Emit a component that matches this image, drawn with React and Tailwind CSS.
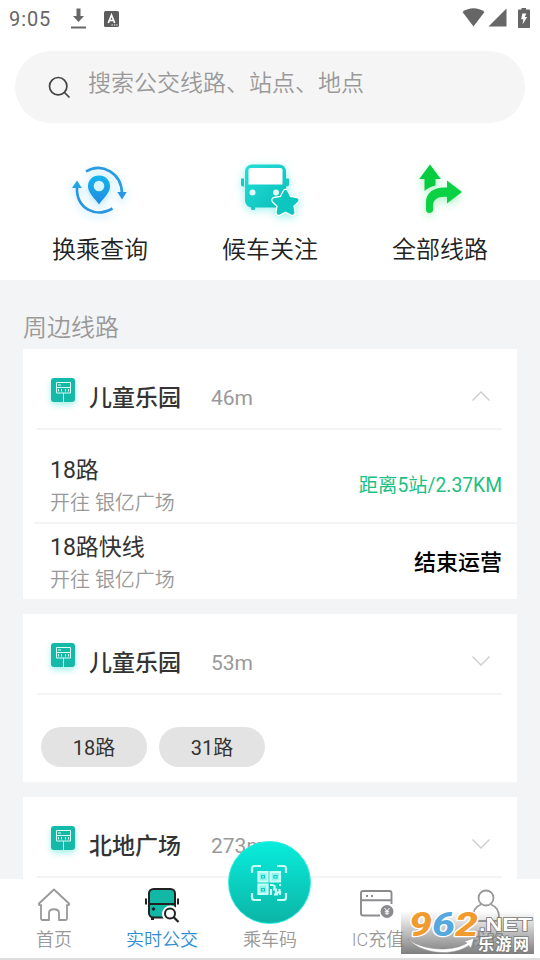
import clsx from "clsx";

const stations = [
  {
    name: "儿童乐园",
    distance: "46m",
    open: true,
    lines: [
      { name: "18路", to: "银亿广场", status: "距离5站/2.37KM", running: true },
      { name: "18路快线", to: "银亿广场", status: "结束运营", running: false },
    ],
  },
  { name: "儿童乐园", distance: "53m", tags: ["18路", "31路"] },
  { name: "北地广场", distance: "273m", tags: [] },
];

function StatusBar() {
  return (
    <div className="flex h-[37px] items-center justify-between pl-[9px] pr-[10px] text-[#666]">
      <div className="flex items-center">
        <span className="mt-px w-[62px] text-[20px] leading-[37px] tracking-[0.9px]">9:05</span>
        <svg width="15" height="21" viewBox="0 0 15 21" fill="#666">
          <path d="M5.500 0.500h4v7.500h3.500L7.500 14 2 8h3.500zM0 18.500h15v2H0z" />
        </svg>
        <svg className="ml-[18px]" width="15" height="16" viewBox="0 0 15 16">
          <rect width="15" height="16" rx="1.500" fill="#5c5c5c" />
          <path d="M4.300 12 7.500 4l3.200 8M5.500 9.500h4" stroke="#fff" strokeWidth="1.700" fill="none" />
          <path d="M7.500 14h1.300M10 14h1.300M12.300 14h1.300" stroke="#fff" strokeWidth="1.200" />
        </svg>
      </div>
      <div className="-mt-[2px] flex items-center">
        <svg width="23" height="19" viewBox="0 0 23 19" fill="#666">
          <path d="M0.500 4C7-1 16-1 22.500 4L11.500 18.500z" />
        </svg>
        <svg className="ml-[3px]" width="19" height="19" viewBox="0 0 19 19" fill="#666">
          <path d="M18.500 0.500v18H0.500z" />
        </svg>
        <svg className="ml-[11px]" width="12" height="20" viewBox="0 0 12 20">
          <path d="M3.500 0h4.500v1.500h3c.6 0 1 .4 1 1V19c0 .6-.4 1-1 1H1c-.6 0-1-.4-1-1V2.500c0-.6.4-1 1-1h2.500z" fill="#666" />
          <path d="M4.300 5.500h4L6.900 9h2.300l-4.700 7.500.8-5.300H3.200z" fill="#fff" />
        </svg>
      </div>
    </div>
  );
}

function SearchBox() {
  return (
    <div className="mx-[15px] mt-[14px] flex h-[72px] items-center rounded-full bg-[#f5f5f5] pl-[33px]">
      <svg width="23" height="23" viewBox="0 0 23 23" fill="none" stroke="#444" strokeWidth="1.700">
        <circle cx="10.200" cy="10.200" r="8.700" />
        <path d="M16.500 16.500 21.500 21.500" />
      </svg>
      <span className="-mt-[7px] ml-[17px] text-[23px] font-[350] leading-[34px] text-[#999]">
        搜索公交线路、站点、地点
      </span>
    </div>
  );
}

function TransferIcon() {
  return (
    <svg
      className="-ml-[2px] drop-shadow-[0_3px_4px_rgba(30,180,255,0.35)]"
      width="60"
      height="60"
      viewBox="0 0 60 60"
      fill="none"
    >
      <defs>
        <linearGradient id="pin" x1="0" y1="0" x2="0" y2="1">
          <stop offset="0" stopColor="#15b4f0" />
          <stop offset="1" stopColor="#2089e0" />
        </linearGradient>
      </defs>
      <path d="M17 11.500C33 2 53 13 53 34" stroke="#2a9be0" strokeWidth="2.600" />
      <path d="M48.300 32h9.400L53 39.500z" fill="#2a96df" />
      <path d="M43.500 48.500C27 58 7 49 8 27" stroke="#2a96df" strokeWidth="2.600" />
      <path d="M3 28h9.800L8 20.500z" fill="#22a5e6" />
      <path
        d="M30 15.500c-6.600 0-11 4.800-11 10.700C19 33 26 38.500 30 44.500c4-6 11-11.500 11-18.300 0-5.900-4.400-10.700-11-10.700z"
        fill="url(#pin)"
      />
      <circle cx="30" cy="26" r="5.300" fill="#d5f5ff" />
    </svg>
  );
}

function BusStarIcon() {
  return (
    <svg className="drop-shadow-[0_2px_4px_rgba(0,220,210,0.4)]" width="60" height="60" viewBox="0 0 60 60">
      <defs>
        <linearGradient id="busBody" x1="0" y1="0" x2="1" y2="1">
          <stop offset="0" stopColor="#25ded8" />
          <stop offset="1" stopColor="#09beb8" />
        </linearGradient>
      </defs>
      <path d="M1 18.500h3v8H3c-1.200 0-2-.8-2-2zM46 18.500h3v6c0 1.200-.8 2-2 2h-1zM11 45h4v3.500c0 2-4 2-4 0z" fill="#17c9c5" />
      <rect x="5" y="4.500" width="41" height="43" rx="7" fill="url(#busBody)" />
      <path d="M10.500 8h30c1.200 0 2 .9 2 2v14.500h-34V10c0-1.100.9-2 2-2z" fill="#fff" />
      <circle cx="12.500" cy="32.500" r="3" fill="#dffcfa" />
      <circle cx="36" cy="32.500" r="3" fill="#dffcfa" />
      <path
        d="M45.500 30c.9 0 1.500.7 2 1.700l2.600 5.300 5.800.9c2.800.4 3.400 2.200 1.500 4.100l-4.100 4.100 1 5.700c.4 2.700-1.200 3.700-3.500 2.500l-5.300-2.700-5.300 2.700c-2.300 1.200-3.900.2-3.500-2.500l1-5.700-4.100-4.100c-1.900-1.900-1.300-3.700 1.500-4.100l5.800-.9 2.600-5.300c.5-1 1.100-1.700 2-1.700z"
        fill="#0bc7c0"
        stroke="#fff"
        strokeWidth="2.600"
        paintOrder="stroke"
      />
    </svg>
  );
}

function RoutesIcon() {
  return (
    <svg className="drop-shadow-[0_3px_4px_rgba(20,220,90,0.35)]" width="60" height="60" viewBox="0 0 60 60">
      <path d="M20 4.500 30.800 19H25.500v6.500c-4 .8-7.500 2.500-11 5.500V19H9.200z" fill="#08cc3f" />
      <path d="M37 20.500 52 32 37 43.500V37c-8-.8-14 2-14 9v4c0 4-7 4-7 0v-8c0-10 9-15.500 21-14.500z" fill="#0bd144" />
    </svg>
  );
}

const shortcuts = [
  { label: "换乘查询", Icon: TransferIcon },
  { label: "候车关注", Icon: BusStarIcon },
  { label: "全部线路", Icon: RoutesIcon },
];

function StopIcon() {
  return (
    <svg className="drop-shadow-[0_3px_3px_rgba(0,215,195,0.35)]" width="24" height="24" viewBox="0 0 24 24" fill="none" stroke="#d9fff9">
      <rect width="24" height="24" rx="3" fill="#15b9a7" stroke="none" />
      <path d="M5.500 4.500h14v10.500h-14zM5.500 9.500h14M12.500 15v9" strokeWidth="1" />
      <path d="M7 7h3M7.500 11v2.500M10.500 11v2.500M14.500 11v2.500M17.500 11v2.500" strokeWidth="1" />
    </svg>
  );
}

function StationCard({ station }) {
  return (
    <div className="bg-white">
      <div className="ml-[14px] mr-[15px] flex h-[81px] items-center border-b-2 border-[#f3f4f6] pl-[14px] pr-3">
        <div className="mb-[12px] mt-[15px]">
          <StopIcon />
        </div>
        <span className="ml-[14px] mt-[21px] text-[23px] font-medium leading-[34px] text-[#333]">{station.name}</span>
        <span className="ml-[30px] mt-[18px] flex-1 text-[21px] leading-[30px] text-[#999]">{station.distance}</span>
        <svg
          className={clsx("mt-[15px]", !station.open && "rotate-180")}
          width="18"
          height="10"
          viewBox="0 0 18 10"
          fill="none"
          stroke="#ccc"
          strokeWidth="1.300"
        >
          <path d="M0.500 9.500 9 1l8.500 8.500" />
        </svg>
      </div>
      {station.lines && (
        <div>
          {station.lines.map((line, i) => (
            <div
              key={line.name}
              className={clsx(
                "ml-[11px] flex justify-between pl-4 pr-[15px]",
                i === 0 ? "h-[94px] border-b-2 border-[#f3f4f6] pt-6" : "h-[75px] pt-[7px]"
              )}
            >
              <div>
                <p className="text-[23px] leading-[34px] text-[#333]">{line.name}</p>
                <p className="text-[20px] font-[350] leading-[30px] text-[#999]">开往 {line.to}</p>
              </div>
              <span
                className={clsx(
                  line.running
                    ? "mt-[17px] text-[19.300px] leading-[30px] text-[#1dbf83]"
                    : "mt-[15px] text-[22px] font-medium leading-[34px] text-black"
                )}
              >
                {line.status}
              </span>
            </div>
          ))}
        </div>
      )}
      {station.tags && (
        <div className="flex h-[87px] gap-3 pl-[18px] pt-8">
          {station.tags.map((tag) => (
            <span
              key={tag}
              className="h-10 w-[106px] rounded-full bg-[#e3e3e3] text-center text-[20px] leading-[42px] text-[#333]"
            >
              {tag}
            </span>
          ))}
        </div>
      )}
    </div>
  );
}

function HomeIcon() {
  return (
    <svg width="34" height="34" viewBox="0 0 34 34" fill="none" stroke="#999" strokeWidth="1.800" strokeLinejoin="round">
      <path d="M2 15.500 17 1.500l15 14c.8.900-.3 2-2 1.500v13.500c0 1-.5 1.500-1.500 1.500h-6.500v-7c0-5-10-5-10 0v7H5.500c-1 0-1.500-.5-1.500-1.500V17C2.300 17.500 1.200 16.400 2 15.500z" />
    </svg>
  );
}

function BusSearchIcon() {
  return (
    <svg width="36" height="36" viewBox="0 0 36 36" fill="none" stroke="#222" strokeWidth="2">
      <path d="M2 11.500v6M34 11.500v6" />
      <path d="M8.500 30.500V33" strokeWidth="3" />
      <rect x="5" y="2" width="26" height="28.500" rx="4.500" fill="#12b8a5" />
      <path d="M5 17h26" />
      <circle cx="9.500" cy="22" r="1.300" fill="#222" strokeWidth="1" />
      <circle cx="26.500" cy="27" r="8.500" fill="#fff" stroke="none" />
      <circle cx="26" cy="26.500" r="5" fill="#fff" />
      <path d="m29.500 30 5 5" strokeWidth="2.300" />
    </svg>
  );
}

function WalletIcon() {
  return (
    <svg className="-ml-[3px]" width="34" height="30" viewBox="0 0 34 30" fill="none" stroke="#8c8c90" strokeWidth="1.900">
      <path d="M20 25.500H3c-1.300 0-2-.7-2-2V3c0-1.300.7-2 2-2h26.500c1.300 0 2 .7 2 2v11M1 10.200h30.500" />
      <path d="M6 6h2M11 6h2" strokeWidth="2" />
      <circle cx="27" cy="21.500" r="6.500" fill="#8c8c90" stroke="none" />
      <path d="m24.500 18 2.500 3 2.500-3M27 21v4M24.800 21.300h4.400M24.800 23.200h4.400" stroke="#fff" strokeWidth="1" />
    </svg>
  );
}

function UserIcon() {
  return (
    <svg className="mt-[2px]" width="28" height="34" viewBox="0 0 28 34" fill="none" stroke="#999" strokeWidth="1.800">
      <circle cx="14" cy="9" r="7.500" />
      <path d="M9 15.500C4 17.500 1 22 1 28c0 3 1 4 4 4h18c3 0 4-1 4-4 0-6-3-10.500-8-12.500" />
    </svg>
  );
}

function ScanButton() {
  return (
    <div className="-ml-[2px] -mt-[45px] flex h-[83px] w-[83px] items-center justify-center rounded-full border border-[#27ebdc] bg-linear-to-b from-[#08eddc] to-[#0bb5a6]">
      <svg width="38" height="38" viewBox="0 0 38 38" fill="none" stroke="#c8fff8" strokeWidth="2.200">
        <path d="M2 9V4.500C2 3 3 2 4.500 2H11M27 2h6.500C35 2 36 3 36 4.500V9M2 29v4.500C2 35 3 36 4.500 36H11M27 36h6.500c1.500 0 2.500-1 2.500-2.500V29" />
        <path d="M8.500 8h9v9.500h-9zM20.500 8H30v9.500h-9.500zM8.500 20.500h9V30h-9z" fill="#8ff5ea" />
        <path d="M11.500 11.500h3V14h-3zM24 11.500h3V14h-3zM11.500 24.500h3V27h-3z" stroke="#10cbbd" strokeWidth="1.200" />
        <path d="M20 21h3.500M29 21h2M24.500 21v4M29.500 25v3.500H26v-3h-3M21 25v6M30 27v4M24 30.500h4" />
      </svg>
    </div>
  );
}

function Tab({ label, active, children }) {
  return (
    <div className="flex w-[108px] flex-col items-center">
      <div className="flex h-[47px] items-center pt-[5px]">{children}</div>
      <span className={clsx("text-[18px] font-[350] leading-[28px]", active ? "text-[#2f8dd3]" : "text-[#999]")}>
        {label}
      </span>
    </div>
  );
}

function TabBar() {
  return (
    <div className="flex h-[81px] border-b-2 border-[#ddd] bg-white">
      <Tab label="首页">
        <HomeIcon />
      </Tab>
      <Tab label="实时公交" active>
        <BusSearchIcon />
      </Tab>
      <Tab label="乘车码">
        <ScanButton />
      </Tab>
      <Tab label="IC充值">
        <WalletIcon />
      </Tab>
      <Tab label="我的">
        <UserIcon />
      </Tab>
    </div>
  );
}

function SiteBadge() {
  return (
    <div className="absolute bottom-[6px] right-[6px] h-[43px] w-[133px] bg-linear-to-b from-[#88888800] to-[#777777f0]">
      <svg
        className="overflow-visible"
        width="133"
        height="43"
        viewBox="0 0 133 43"
        fontFamily="Liberation Sans, Noto Sans CJK SC, sans-serif"
        fontWeight="bold"
      >
        <g
          fontSize="33"
          fontFamily="Roboto, sans-serif"
          fontStyle="italic"
          fontWeight="800"
          stroke="#fff"
          strokeWidth="2.500"
          strokeLinejoin="round"
          paintOrder="stroke"
        >
          <text x="8" y="25" textLength="69" lengthAdjust="spacingAndGlyphs">
            <tspan fill="#f19a2e">9</tspan>
            <tspan fill="#55a9df">6</tspan>
            <tspan fill="#f19a2e">2</tspan>
          </text>
        </g>
        <path d="M7 28c15 12 45 13 59 4l-3-1.500 10-3.500-3 10-2.500-2.500C52 46 20 43 7 28z" fill="#fff" stroke="#888" strokeWidth="0.500" />
        <g fill="#fff" stroke="#777" strokeWidth="1.500" paintOrder="stroke">
          <text x="78" y="20" fontSize="19" textLength="53" lengthAdjust="spacingAndGlyphs">.NET</text>
          <text x="77" y="39" fontSize="16" textLength="51">乐游网</text>
        </g>
      </svg>
    </div>
  );
}

export default function App() {
  return (
    <div className="relative flex h-[960px] w-[540px] flex-col overflow-hidden bg-[#f3f4f6] font-['Roboto','Noto_Sans_CJK_SC',sans-serif]">
      <div className="h-[280px] shrink-0 bg-white">
        <StatusBar />
        <SearchBox />
        <div className="mt-[37px] flex px-[15px]">
          {shortcuts.map(({ label, Icon }) => (
            <div key={label} className="flex w-[170px] flex-col items-center">
              <Icon />
              <span className="mt-[13px] text-[24px] font-[350] leading-[34px] text-[#222]">{label}</span>
            </div>
          ))}
        </div>
      </div>

      <div className="min-h-0 flex-1 overflow-hidden px-[23px]">
        <h2 className="pt-[31px] text-[24px] font-[350] leading-[35px] text-[#999]">周边线路</h2>
        <div className="mt-[3px] flex flex-col gap-[15px]">
          {stations.map((station, i) => (
            <StationCard key={i} station={station} />
          ))}
        </div>
      </div>

      <div className="z-10">
        <TabBar />
      </div>
      <div className="z-20">
        <SiteBadge />
      </div>
    </div>
  );
}
